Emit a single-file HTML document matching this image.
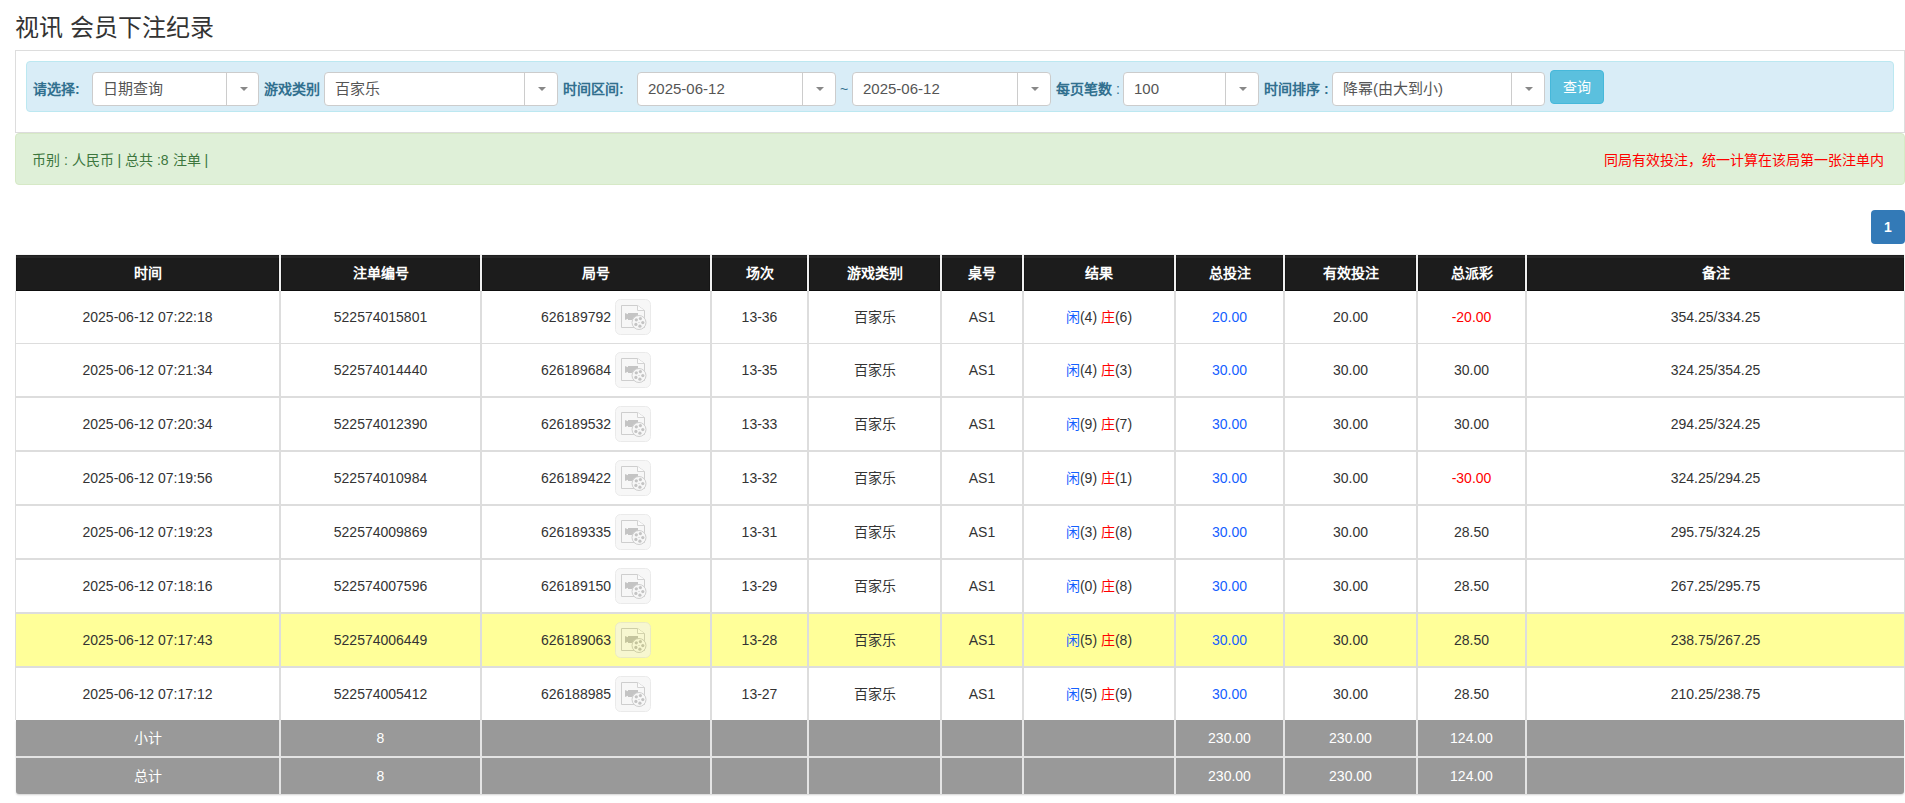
<!DOCTYPE html>
<html lang="zh-CN"><head><meta charset="utf-8"><title>视讯 会员下注纪录</title>
<style>
html,body{margin:0;padding:0;background:#fff;}
body{width:1905px;height:803px;overflow:hidden;position:relative;font-family:"Liberation Sans",sans-serif;font-size:14px;color:#333;}
.abs{position:absolute;}
.t{position:absolute;white-space:nowrap;}
.title{left:15px;top:13px;font-size:24px;line-height:30px;color:#333;}
.panel{left:15px;top:50px;width:1888px;height:81px;border:1px solid #ddd;border-bottom-color:#dcdcdc;}
.info{left:26px;top:61px;width:1866px;height:49px;border:1px solid #bce8f1;background:#d9edf7;border-radius:4px;}
.lab{position:absolute;top:80px;line-height:18px;font-size:14px;font-weight:bold;color:#31708f;white-space:nowrap;}
.sel{position:absolute;top:72px;height:32px;border:1px solid #ccc;border-radius:4px;background:#fff;}
.sel .v{position:absolute;left:10px;top:7px;line-height:18px;font-size:15px;color:#555;white-space:nowrap;}
.sel .d{position:absolute;top:0;bottom:0;width:1px;background:#ccc;}
.sel .c{position:absolute;top:14px;width:0;height:0;border-left:4px solid transparent;border-right:4px solid transparent;border-top:4px solid #888;}
.btn{left:1550px;top:70px;width:52px;height:32px;border:1px solid #46b8da;background:#5bc0de;border-radius:4px;color:#fff;text-align:center;line-height:32px;font-size:14px;}
.succ{left:15px;top:133px;width:1888px;height:50px;border:1px solid #d6e9c6;background:#dff0d8;border-radius:4px;}
.pg{left:1871px;top:210px;width:34px;height:34px;background:#337ab7;border-radius:4px;color:#fff;font-weight:bold;text-align:center;line-height:34px;font-size:14px;}
.hd{position:absolute;top:255px;height:36px;background:#1c1c1c;box-shadow:inset 0 1px 0 #1e1e1e, inset 0 3px 0 #282828, inset 0 -1px 0 #0e0e0e, inset 1px 0 0 #151515, inset -1px 0 0 #151515;color:#fff;font-weight:bold;text-align:center;line-height:36px;white-space:nowrap;}
.cell{position:absolute;text-align:center;white-space:nowrap;line-height:20px;}
.ic{display:inline-block;width:36px;height:36px;vertical-align:middle;margin-left:4px;position:relative;top:-1px;}
.ic svg{display:block;}
.b{color:#1560ff;} .r{color:#ff0000;}
.ft{color:#fff;}
</style></head><body>

<div class="t title">视讯 会员下注纪录</div>
<div class="abs panel"></div>
<div class="abs info"></div>
<div class="lab" style="left:33px">请选择:</div>
<div class="sel" style="left:92px;width:165px"><span class="v">日期查询</span><span class="d" style="left:133px"></span><span class="c" style="left:146.5px"></span></div>
<div class="lab" style="left:264px">游戏类别</div>
<div class="sel" style="left:324px;width:232px"><span class="v">百家乐</span><span class="d" style="left:199px"></span><span class="c" style="left:213.0px"></span></div>
<div class="lab" style="left:563px">时间区间:</div>
<div class="sel" style="left:637px;width:197px"><span class="v">2025-06-12</span><span class="d" style="left:164px"></span><span class="c" style="left:178.0px"></span></div>
<div class="lab" style="left:840px;font-weight:normal">~</div>
<div class="sel" style="left:852px;width:197px"><span class="v">2025-06-12</span><span class="d" style="left:164px"></span><span class="c" style="left:178.0px"></span></div>
<div class="lab" style="left:1056px">每页笔数 <span style="font-weight:normal">:</span></div>
<div class="sel" style="left:1123px;width:134px"><span class="v">100</span><span class="d" style="left:101px"></span><span class="c" style="left:115.0px"></span></div>
<div class="lab" style="left:1264px">时间排序 :</div>
<div class="sel" style="left:1332px;width:211px"><span class="v">降幂(由大到小)</span><span class="d" style="left:178px"></span><span class="c" style="left:192.0px"></span></div>
<div class="abs btn">查询</div>
<div class="abs succ"></div>
<div class="t" style="left:32px;top:149.5px;line-height:20px;color:#3c763d">币别 : 人民币 | 总共 :8 注单 |</div>
<div class="t" style="left:1604px;top:149.5px;line-height:20px;color:#ff0000">同局有效投注，统一计算在该局第一张注单内</div>
<div class="abs pg">1</div>
<div class="abs" style="left:15px;top:291px;width:1890px;height:429px;background:#ddd"></div>
<div class="abs" style="left:16px;top:255px;width:1888px;height:36px;background:#f0f0f0;box-shadow:0 0 1px rgba(0,0,0,.25)"></div>
<div class="abs" style="left:16px;top:720px;width:1888px;height:74px;background:#e4e4e4;border-radius:0 0 3px 3px;box-shadow:0 1px 2px rgba(0,0,0,.18)"></div>
<div class="hd" style="left:16px;width:263px">时间</div>
<div class="hd" style="left:281px;width:199px">注单编号</div>
<div class="hd" style="left:482px;width:228px">局号</div>
<div class="hd" style="left:712px;width:95px">场次</div>
<div class="hd" style="left:809px;width:131px">游戏类别</div>
<div class="hd" style="left:942px;width:80px">桌号</div>
<div class="hd" style="left:1024px;width:150px">结果</div>
<div class="hd" style="left:1176px;width:107px">总投注</div>
<div class="hd" style="left:1285px;width:131px">有效投注</div>
<div class="hd" style="left:1418px;width:107px">总派彩</div>
<div class="hd" style="left:1527px;width:377px">备注</div>
<div class="cell" style="left:16px;top:291px;width:263px;height:52px;background:#fff;line-height:52px">2025-06-12 07:22:18</div>
<div class="cell" style="left:281px;top:291px;width:199px;height:52px;background:#fff;line-height:52px">522574015801</div>
<div class="cell" style="left:482px;top:291px;width:228px;height:52px;background:#fff;line-height:52px">626189792<span class="ic"><svg width="36" height="36" viewBox="0 0 36 36" style="opacity:.61"><rect x="0.5" y="0.5" width="35" height="35" rx="5" fill="#f3f3f3" stroke="#dedede"/><path d="M6.5 6.5H22.5L29.5 11.5V28.5H6.5Z" fill="#f3f3f3" stroke="#b0b0b0"/><path d="M22.5 6.5V11.5H29.5" fill="#fafafa" stroke="#b8b8b8"/><path d="M10 14L13 15.2V14H23V21H13V19.8L10 21Z" fill="#a0a0a0"/><circle cx="24" cy="23.5" r="7" fill="#f3f3f3" stroke="#b0b0b0"/><g fill="#a0a0a0"><circle cx="21.3" cy="20.8" r="1.6"/><circle cx="25.4" cy="19.6" r="1.6"/><circle cx="27.8" cy="23.6" r="1.6"/><circle cx="24.9" cy="27.2" r="1.6"/><circle cx="20.9" cy="25.4" r="1.6"/><circle cx="24" cy="23.5" r="0.6"/></g></svg></span></div>
<div class="cell" style="left:712px;top:291px;width:95px;height:52px;background:#fff;line-height:52px">13-36</div>
<div class="cell" style="left:809px;top:291px;width:131px;height:52px;background:#fff;line-height:52px">百家乐</div>
<div class="cell" style="left:942px;top:291px;width:80px;height:52px;background:#fff;line-height:52px">AS1</div>
<div class="cell" style="left:1024px;top:291px;width:150px;height:52px;background:#fff;line-height:52px"><span class="b">闲</span>(4) <span class="r">庄</span>(6)</div>
<div class="cell" style="left:1176px;top:291px;width:107px;height:52px;background:#fff;line-height:52px"><span class="b">20.00</span></div>
<div class="cell" style="left:1285px;top:291px;width:131px;height:52px;background:#fff;line-height:52px">20.00</div>
<div class="cell" style="left:1418px;top:291px;width:107px;height:52px;background:#fff;line-height:52px"><span class="r">-20.00</span></div>
<div class="cell" style="left:1527px;top:291px;width:377px;height:52px;background:#fff;line-height:52px">354.25/334.25</div>
<div class="cell" style="left:16px;top:344px;width:263px;height:52px;background:#fff;line-height:52px">2025-06-12 07:21:34</div>
<div class="cell" style="left:281px;top:344px;width:199px;height:52px;background:#fff;line-height:52px">522574014440</div>
<div class="cell" style="left:482px;top:344px;width:228px;height:52px;background:#fff;line-height:52px">626189684<span class="ic"><svg width="36" height="36" viewBox="0 0 36 36" style="opacity:.61"><rect x="0.5" y="0.5" width="35" height="35" rx="5" fill="#f3f3f3" stroke="#dedede"/><path d="M6.5 6.5H22.5L29.5 11.5V28.5H6.5Z" fill="#f3f3f3" stroke="#b0b0b0"/><path d="M22.5 6.5V11.5H29.5" fill="#fafafa" stroke="#b8b8b8"/><path d="M10 14L13 15.2V14H23V21H13V19.8L10 21Z" fill="#a0a0a0"/><circle cx="24" cy="23.5" r="7" fill="#f3f3f3" stroke="#b0b0b0"/><g fill="#a0a0a0"><circle cx="21.3" cy="20.8" r="1.6"/><circle cx="25.4" cy="19.6" r="1.6"/><circle cx="27.8" cy="23.6" r="1.6"/><circle cx="24.9" cy="27.2" r="1.6"/><circle cx="20.9" cy="25.4" r="1.6"/><circle cx="24" cy="23.5" r="0.6"/></g></svg></span></div>
<div class="cell" style="left:712px;top:344px;width:95px;height:52px;background:#fff;line-height:52px">13-35</div>
<div class="cell" style="left:809px;top:344px;width:131px;height:52px;background:#fff;line-height:52px">百家乐</div>
<div class="cell" style="left:942px;top:344px;width:80px;height:52px;background:#fff;line-height:52px">AS1</div>
<div class="cell" style="left:1024px;top:344px;width:150px;height:52px;background:#fff;line-height:52px"><span class="b">闲</span>(4) <span class="r">庄</span>(3)</div>
<div class="cell" style="left:1176px;top:344px;width:107px;height:52px;background:#fff;line-height:52px"><span class="b">30.00</span></div>
<div class="cell" style="left:1285px;top:344px;width:131px;height:52px;background:#fff;line-height:52px">30.00</div>
<div class="cell" style="left:1418px;top:344px;width:107px;height:52px;background:#fff;line-height:52px">30.00</div>
<div class="cell" style="left:1527px;top:344px;width:377px;height:52px;background:#fff;line-height:52px">324.25/354.25</div>
<div class="cell" style="left:16px;top:398px;width:263px;height:52px;background:#fff;line-height:52px">2025-06-12 07:20:34</div>
<div class="cell" style="left:281px;top:398px;width:199px;height:52px;background:#fff;line-height:52px">522574012390</div>
<div class="cell" style="left:482px;top:398px;width:228px;height:52px;background:#fff;line-height:52px">626189532<span class="ic"><svg width="36" height="36" viewBox="0 0 36 36" style="opacity:.61"><rect x="0.5" y="0.5" width="35" height="35" rx="5" fill="#f3f3f3" stroke="#dedede"/><path d="M6.5 6.5H22.5L29.5 11.5V28.5H6.5Z" fill="#f3f3f3" stroke="#b0b0b0"/><path d="M22.5 6.5V11.5H29.5" fill="#fafafa" stroke="#b8b8b8"/><path d="M10 14L13 15.2V14H23V21H13V19.8L10 21Z" fill="#a0a0a0"/><circle cx="24" cy="23.5" r="7" fill="#f3f3f3" stroke="#b0b0b0"/><g fill="#a0a0a0"><circle cx="21.3" cy="20.8" r="1.6"/><circle cx="25.4" cy="19.6" r="1.6"/><circle cx="27.8" cy="23.6" r="1.6"/><circle cx="24.9" cy="27.2" r="1.6"/><circle cx="20.9" cy="25.4" r="1.6"/><circle cx="24" cy="23.5" r="0.6"/></g></svg></span></div>
<div class="cell" style="left:712px;top:398px;width:95px;height:52px;background:#fff;line-height:52px">13-33</div>
<div class="cell" style="left:809px;top:398px;width:131px;height:52px;background:#fff;line-height:52px">百家乐</div>
<div class="cell" style="left:942px;top:398px;width:80px;height:52px;background:#fff;line-height:52px">AS1</div>
<div class="cell" style="left:1024px;top:398px;width:150px;height:52px;background:#fff;line-height:52px"><span class="b">闲</span>(9) <span class="r">庄</span>(7)</div>
<div class="cell" style="left:1176px;top:398px;width:107px;height:52px;background:#fff;line-height:52px"><span class="b">30.00</span></div>
<div class="cell" style="left:1285px;top:398px;width:131px;height:52px;background:#fff;line-height:52px">30.00</div>
<div class="cell" style="left:1418px;top:398px;width:107px;height:52px;background:#fff;line-height:52px">30.00</div>
<div class="cell" style="left:1527px;top:398px;width:377px;height:52px;background:#fff;line-height:52px">294.25/324.25</div>
<div class="cell" style="left:16px;top:452px;width:263px;height:52px;background:#fff;line-height:52px">2025-06-12 07:19:56</div>
<div class="cell" style="left:281px;top:452px;width:199px;height:52px;background:#fff;line-height:52px">522574010984</div>
<div class="cell" style="left:482px;top:452px;width:228px;height:52px;background:#fff;line-height:52px">626189422<span class="ic"><svg width="36" height="36" viewBox="0 0 36 36" style="opacity:.61"><rect x="0.5" y="0.5" width="35" height="35" rx="5" fill="#f3f3f3" stroke="#dedede"/><path d="M6.5 6.5H22.5L29.5 11.5V28.5H6.5Z" fill="#f3f3f3" stroke="#b0b0b0"/><path d="M22.5 6.5V11.5H29.5" fill="#fafafa" stroke="#b8b8b8"/><path d="M10 14L13 15.2V14H23V21H13V19.8L10 21Z" fill="#a0a0a0"/><circle cx="24" cy="23.5" r="7" fill="#f3f3f3" stroke="#b0b0b0"/><g fill="#a0a0a0"><circle cx="21.3" cy="20.8" r="1.6"/><circle cx="25.4" cy="19.6" r="1.6"/><circle cx="27.8" cy="23.6" r="1.6"/><circle cx="24.9" cy="27.2" r="1.6"/><circle cx="20.9" cy="25.4" r="1.6"/><circle cx="24" cy="23.5" r="0.6"/></g></svg></span></div>
<div class="cell" style="left:712px;top:452px;width:95px;height:52px;background:#fff;line-height:52px">13-32</div>
<div class="cell" style="left:809px;top:452px;width:131px;height:52px;background:#fff;line-height:52px">百家乐</div>
<div class="cell" style="left:942px;top:452px;width:80px;height:52px;background:#fff;line-height:52px">AS1</div>
<div class="cell" style="left:1024px;top:452px;width:150px;height:52px;background:#fff;line-height:52px"><span class="b">闲</span>(9) <span class="r">庄</span>(1)</div>
<div class="cell" style="left:1176px;top:452px;width:107px;height:52px;background:#fff;line-height:52px"><span class="b">30.00</span></div>
<div class="cell" style="left:1285px;top:452px;width:131px;height:52px;background:#fff;line-height:52px">30.00</div>
<div class="cell" style="left:1418px;top:452px;width:107px;height:52px;background:#fff;line-height:52px"><span class="r">-30.00</span></div>
<div class="cell" style="left:1527px;top:452px;width:377px;height:52px;background:#fff;line-height:52px">324.25/294.25</div>
<div class="cell" style="left:16px;top:506px;width:263px;height:52px;background:#fff;line-height:52px">2025-06-12 07:19:23</div>
<div class="cell" style="left:281px;top:506px;width:199px;height:52px;background:#fff;line-height:52px">522574009869</div>
<div class="cell" style="left:482px;top:506px;width:228px;height:52px;background:#fff;line-height:52px">626189335<span class="ic"><svg width="36" height="36" viewBox="0 0 36 36" style="opacity:.61"><rect x="0.5" y="0.5" width="35" height="35" rx="5" fill="#f3f3f3" stroke="#dedede"/><path d="M6.5 6.5H22.5L29.5 11.5V28.5H6.5Z" fill="#f3f3f3" stroke="#b0b0b0"/><path d="M22.5 6.5V11.5H29.5" fill="#fafafa" stroke="#b8b8b8"/><path d="M10 14L13 15.2V14H23V21H13V19.8L10 21Z" fill="#a0a0a0"/><circle cx="24" cy="23.5" r="7" fill="#f3f3f3" stroke="#b0b0b0"/><g fill="#a0a0a0"><circle cx="21.3" cy="20.8" r="1.6"/><circle cx="25.4" cy="19.6" r="1.6"/><circle cx="27.8" cy="23.6" r="1.6"/><circle cx="24.9" cy="27.2" r="1.6"/><circle cx="20.9" cy="25.4" r="1.6"/><circle cx="24" cy="23.5" r="0.6"/></g></svg></span></div>
<div class="cell" style="left:712px;top:506px;width:95px;height:52px;background:#fff;line-height:52px">13-31</div>
<div class="cell" style="left:809px;top:506px;width:131px;height:52px;background:#fff;line-height:52px">百家乐</div>
<div class="cell" style="left:942px;top:506px;width:80px;height:52px;background:#fff;line-height:52px">AS1</div>
<div class="cell" style="left:1024px;top:506px;width:150px;height:52px;background:#fff;line-height:52px"><span class="b">闲</span>(3) <span class="r">庄</span>(8)</div>
<div class="cell" style="left:1176px;top:506px;width:107px;height:52px;background:#fff;line-height:52px"><span class="b">30.00</span></div>
<div class="cell" style="left:1285px;top:506px;width:131px;height:52px;background:#fff;line-height:52px">30.00</div>
<div class="cell" style="left:1418px;top:506px;width:107px;height:52px;background:#fff;line-height:52px">28.50</div>
<div class="cell" style="left:1527px;top:506px;width:377px;height:52px;background:#fff;line-height:52px">295.75/324.25</div>
<div class="cell" style="left:16px;top:560px;width:263px;height:52px;background:#fff;line-height:52px">2025-06-12 07:18:16</div>
<div class="cell" style="left:281px;top:560px;width:199px;height:52px;background:#fff;line-height:52px">522574007596</div>
<div class="cell" style="left:482px;top:560px;width:228px;height:52px;background:#fff;line-height:52px">626189150<span class="ic"><svg width="36" height="36" viewBox="0 0 36 36" style="opacity:.61"><rect x="0.5" y="0.5" width="35" height="35" rx="5" fill="#f3f3f3" stroke="#dedede"/><path d="M6.5 6.5H22.5L29.5 11.5V28.5H6.5Z" fill="#f3f3f3" stroke="#b0b0b0"/><path d="M22.5 6.5V11.5H29.5" fill="#fafafa" stroke="#b8b8b8"/><path d="M10 14L13 15.2V14H23V21H13V19.8L10 21Z" fill="#a0a0a0"/><circle cx="24" cy="23.5" r="7" fill="#f3f3f3" stroke="#b0b0b0"/><g fill="#a0a0a0"><circle cx="21.3" cy="20.8" r="1.6"/><circle cx="25.4" cy="19.6" r="1.6"/><circle cx="27.8" cy="23.6" r="1.6"/><circle cx="24.9" cy="27.2" r="1.6"/><circle cx="20.9" cy="25.4" r="1.6"/><circle cx="24" cy="23.5" r="0.6"/></g></svg></span></div>
<div class="cell" style="left:712px;top:560px;width:95px;height:52px;background:#fff;line-height:52px">13-29</div>
<div class="cell" style="left:809px;top:560px;width:131px;height:52px;background:#fff;line-height:52px">百家乐</div>
<div class="cell" style="left:942px;top:560px;width:80px;height:52px;background:#fff;line-height:52px">AS1</div>
<div class="cell" style="left:1024px;top:560px;width:150px;height:52px;background:#fff;line-height:52px"><span class="b">闲</span>(0) <span class="r">庄</span>(8)</div>
<div class="cell" style="left:1176px;top:560px;width:107px;height:52px;background:#fff;line-height:52px"><span class="b">30.00</span></div>
<div class="cell" style="left:1285px;top:560px;width:131px;height:52px;background:#fff;line-height:52px">30.00</div>
<div class="cell" style="left:1418px;top:560px;width:107px;height:52px;background:#fff;line-height:52px">28.50</div>
<div class="cell" style="left:1527px;top:560px;width:377px;height:52px;background:#fff;line-height:52px">267.25/295.75</div>
<div class="cell" style="left:16px;top:614px;width:263px;height:52px;background:#ffff99;line-height:52px">2025-06-12 07:17:43</div>
<div class="cell" style="left:281px;top:614px;width:199px;height:52px;background:#ffff99;line-height:52px">522574006449</div>
<div class="cell" style="left:482px;top:614px;width:228px;height:52px;background:#ffff99;line-height:52px">626189063<span class="ic"><svg width="36" height="36" viewBox="0 0 36 36" style="opacity:.61"><rect x="0.5" y="0.5" width="35" height="35" rx="5" fill="#f3f3f3" stroke="#dedede"/><path d="M6.5 6.5H22.5L29.5 11.5V28.5H6.5Z" fill="#f3f3f3" stroke="#b0b0b0"/><path d="M22.5 6.5V11.5H29.5" fill="#fafafa" stroke="#b8b8b8"/><path d="M10 14L13 15.2V14H23V21H13V19.8L10 21Z" fill="#a0a0a0"/><circle cx="24" cy="23.5" r="7" fill="#f3f3f3" stroke="#b0b0b0"/><g fill="#a0a0a0"><circle cx="21.3" cy="20.8" r="1.6"/><circle cx="25.4" cy="19.6" r="1.6"/><circle cx="27.8" cy="23.6" r="1.6"/><circle cx="24.9" cy="27.2" r="1.6"/><circle cx="20.9" cy="25.4" r="1.6"/><circle cx="24" cy="23.5" r="0.6"/></g></svg></span></div>
<div class="cell" style="left:712px;top:614px;width:95px;height:52px;background:#ffff99;line-height:52px">13-28</div>
<div class="cell" style="left:809px;top:614px;width:131px;height:52px;background:#ffff99;line-height:52px">百家乐</div>
<div class="cell" style="left:942px;top:614px;width:80px;height:52px;background:#ffff99;line-height:52px">AS1</div>
<div class="cell" style="left:1024px;top:614px;width:150px;height:52px;background:#ffff99;line-height:52px"><span class="b">闲</span>(5) <span class="r">庄</span>(8)</div>
<div class="cell" style="left:1176px;top:614px;width:107px;height:52px;background:#ffff99;line-height:52px"><span class="b">30.00</span></div>
<div class="cell" style="left:1285px;top:614px;width:131px;height:52px;background:#ffff99;line-height:52px">30.00</div>
<div class="cell" style="left:1418px;top:614px;width:107px;height:52px;background:#ffff99;line-height:52px">28.50</div>
<div class="cell" style="left:1527px;top:614px;width:377px;height:52px;background:#ffff99;line-height:52px">238.75/267.25</div>
<div class="cell" style="left:16px;top:668px;width:263px;height:52px;background:#fff;line-height:52px">2025-06-12 07:17:12</div>
<div class="cell" style="left:281px;top:668px;width:199px;height:52px;background:#fff;line-height:52px">522574005412</div>
<div class="cell" style="left:482px;top:668px;width:228px;height:52px;background:#fff;line-height:52px">626188985<span class="ic"><svg width="36" height="36" viewBox="0 0 36 36" style="opacity:.61"><rect x="0.5" y="0.5" width="35" height="35" rx="5" fill="#f3f3f3" stroke="#dedede"/><path d="M6.5 6.5H22.5L29.5 11.5V28.5H6.5Z" fill="#f3f3f3" stroke="#b0b0b0"/><path d="M22.5 6.5V11.5H29.5" fill="#fafafa" stroke="#b8b8b8"/><path d="M10 14L13 15.2V14H23V21H13V19.8L10 21Z" fill="#a0a0a0"/><circle cx="24" cy="23.5" r="7" fill="#f3f3f3" stroke="#b0b0b0"/><g fill="#a0a0a0"><circle cx="21.3" cy="20.8" r="1.6"/><circle cx="25.4" cy="19.6" r="1.6"/><circle cx="27.8" cy="23.6" r="1.6"/><circle cx="24.9" cy="27.2" r="1.6"/><circle cx="20.9" cy="25.4" r="1.6"/><circle cx="24" cy="23.5" r="0.6"/></g></svg></span></div>
<div class="cell" style="left:712px;top:668px;width:95px;height:52px;background:#fff;line-height:52px">13-27</div>
<div class="cell" style="left:809px;top:668px;width:131px;height:52px;background:#fff;line-height:52px">百家乐</div>
<div class="cell" style="left:942px;top:668px;width:80px;height:52px;background:#fff;line-height:52px">AS1</div>
<div class="cell" style="left:1024px;top:668px;width:150px;height:52px;background:#fff;line-height:52px"><span class="b">闲</span>(5) <span class="r">庄</span>(9)</div>
<div class="cell" style="left:1176px;top:668px;width:107px;height:52px;background:#fff;line-height:52px"><span class="b">30.00</span></div>
<div class="cell" style="left:1285px;top:668px;width:131px;height:52px;background:#fff;line-height:52px">30.00</div>
<div class="cell" style="left:1418px;top:668px;width:107px;height:52px;background:#fff;line-height:52px">28.50</div>
<div class="cell" style="left:1527px;top:668px;width:377px;height:52px;background:#fff;line-height:52px">210.25/238.75</div>
<div class="cell ft" style="left:16px;top:720px;width:263px;height:36px;background:#999;line-height:36px;">小计</div>
<div class="cell ft" style="left:281px;top:720px;width:199px;height:36px;background:#999;line-height:36px;">8</div>
<div class="cell ft" style="left:482px;top:720px;width:228px;height:36px;background:#999;line-height:36px;"></div>
<div class="cell ft" style="left:712px;top:720px;width:95px;height:36px;background:#999;line-height:36px;"></div>
<div class="cell ft" style="left:809px;top:720px;width:131px;height:36px;background:#999;line-height:36px;"></div>
<div class="cell ft" style="left:942px;top:720px;width:80px;height:36px;background:#999;line-height:36px;"></div>
<div class="cell ft" style="left:1024px;top:720px;width:150px;height:36px;background:#999;line-height:36px;"></div>
<div class="cell ft" style="left:1176px;top:720px;width:107px;height:36px;background:#999;line-height:36px;">230.00</div>
<div class="cell ft" style="left:1285px;top:720px;width:131px;height:36px;background:#999;line-height:36px;">230.00</div>
<div class="cell ft" style="left:1418px;top:720px;width:107px;height:36px;background:#999;line-height:36px;">124.00</div>
<div class="cell ft" style="left:1527px;top:720px;width:377px;height:36px;background:#999;line-height:36px;"></div>
<div class="cell ft" style="left:16px;top:758px;width:263px;height:36px;background:#999;line-height:36px;border-bottom-left-radius:3px">总计</div>
<div class="cell ft" style="left:281px;top:758px;width:199px;height:36px;background:#999;line-height:36px;">8</div>
<div class="cell ft" style="left:482px;top:758px;width:228px;height:36px;background:#999;line-height:36px;"></div>
<div class="cell ft" style="left:712px;top:758px;width:95px;height:36px;background:#999;line-height:36px;"></div>
<div class="cell ft" style="left:809px;top:758px;width:131px;height:36px;background:#999;line-height:36px;"></div>
<div class="cell ft" style="left:942px;top:758px;width:80px;height:36px;background:#999;line-height:36px;"></div>
<div class="cell ft" style="left:1024px;top:758px;width:150px;height:36px;background:#999;line-height:36px;"></div>
<div class="cell ft" style="left:1176px;top:758px;width:107px;height:36px;background:#999;line-height:36px;">230.00</div>
<div class="cell ft" style="left:1285px;top:758px;width:131px;height:36px;background:#999;line-height:36px;">230.00</div>
<div class="cell ft" style="left:1418px;top:758px;width:107px;height:36px;background:#999;line-height:36px;">124.00</div>
<div class="cell ft" style="left:1527px;top:758px;width:377px;height:36px;background:#999;line-height:36px;border-bottom-right-radius:3px"></div>
</body></html>
